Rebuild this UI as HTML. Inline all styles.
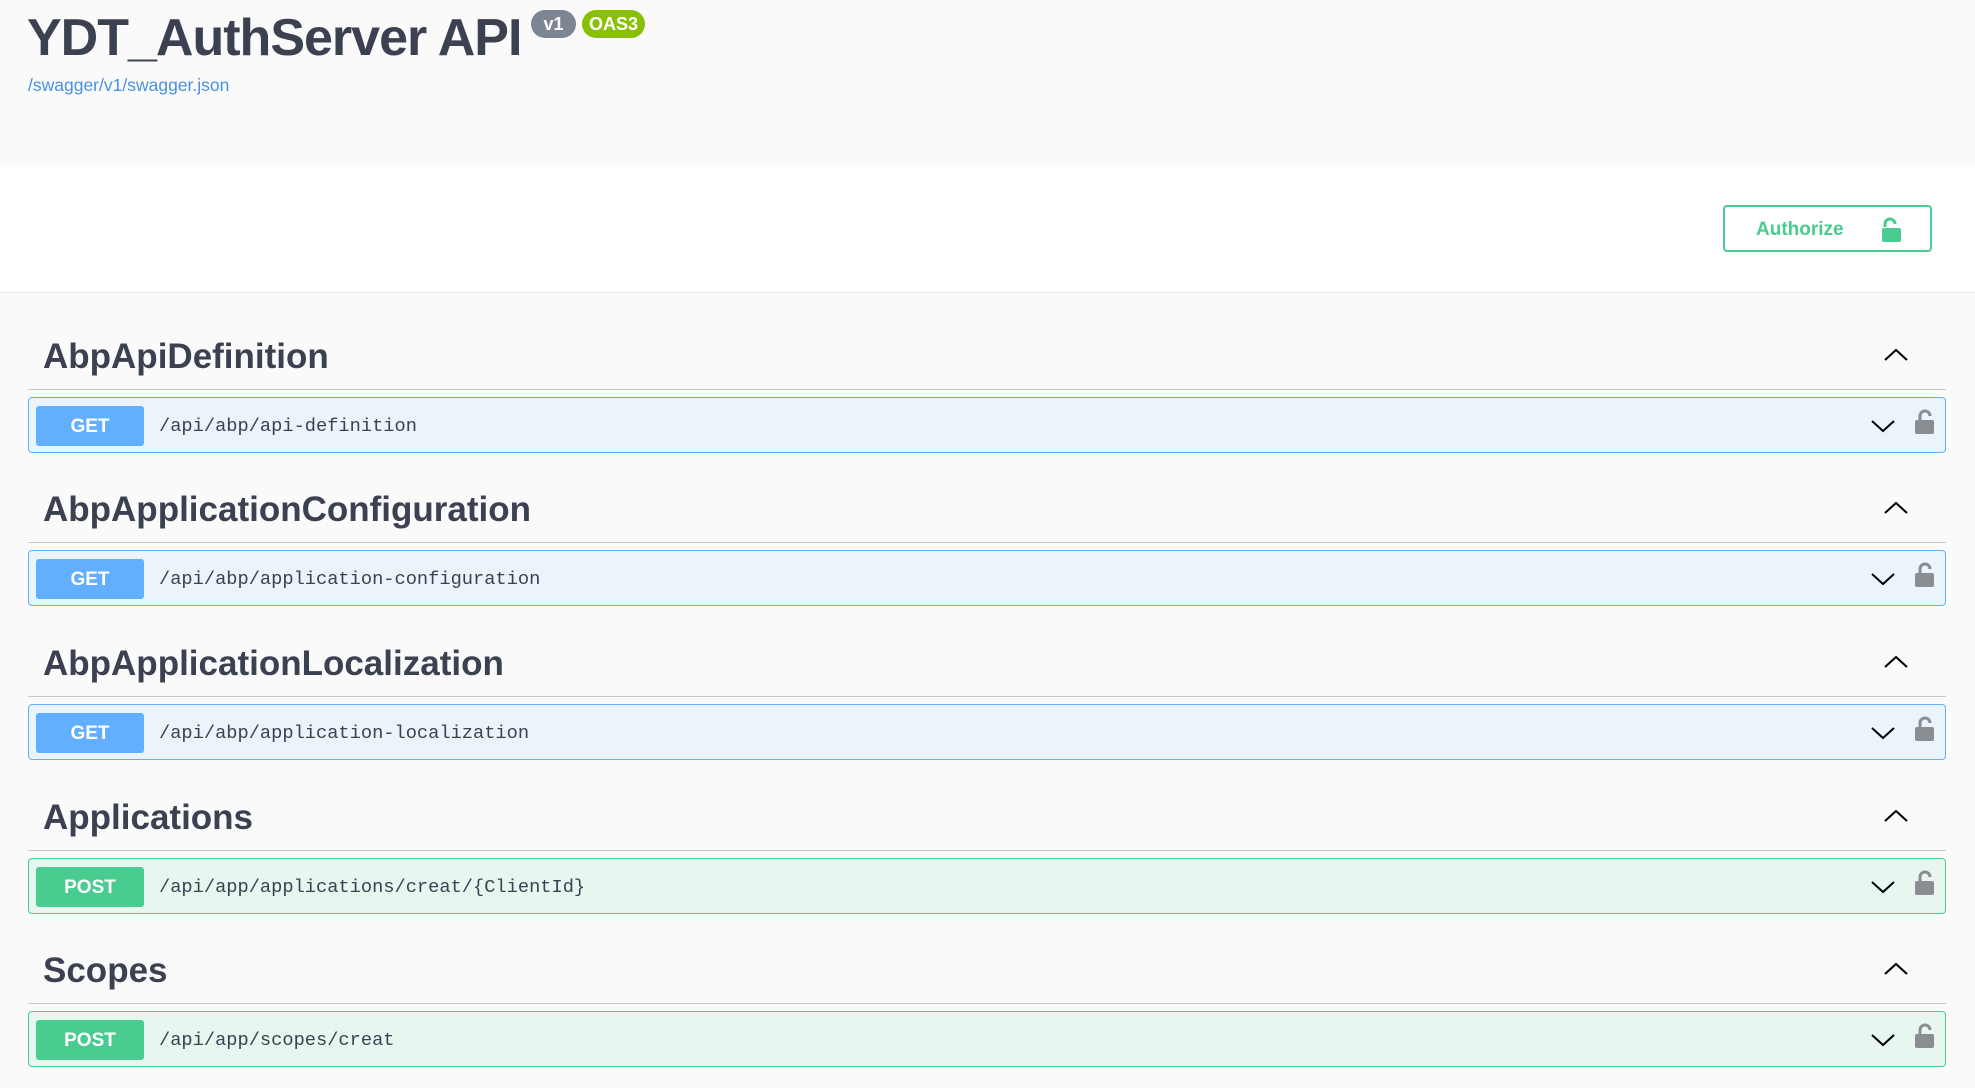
<!DOCTYPE html>
<html><head><meta charset="utf-8"><style>
*{margin:0;padding:0;box-sizing:border-box}
body{width:1975px;height:1088px;overflow:hidden;background:#fafafa;font-family:"Liberation Sans",sans-serif;color:#3b4151;position:relative}
.abs{position:absolute}
.title{left:27px;top:8px;font-size:52px;font-weight:bold;letter-spacing:-1px;white-space:nowrap}
.badge{position:absolute;top:10px;height:28px;border-radius:14px;color:#fff;font-size:18px;font-weight:bold;line-height:28px;text-align:center}
.link{left:28px;top:75px;font-size:17.5px;color:#4990e2}
.white{left:0;top:165px;width:1975px;height:128px;background:#fff;border-bottom:1px solid #e8e8e8}
.auth{left:1723px;top:205px;width:209px;height:47px;border:2px solid #49cc90;border-radius:4px;color:#49cc90;font-weight:bold;font-size:19px;line-height:45px;padding-left:31px}
.sec{position:absolute;left:28px;width:1918px}
.sec h2{position:absolute;left:15px;font-size:35px;font-weight:bold;white-space:nowrap}
.sec .div{position:absolute;left:0;top:33px;width:1918px;height:1px;background:#c8c8c8}
.row{position:absolute;left:0;top:41px;width:1918px;height:56px;border:1px solid;border-radius:4px}
.row .m{position:absolute;left:7px;top:8px;width:108px;height:40px;border-radius:3px;color:#fff;font-weight:bold;font-size:19px;line-height:41px;text-align:center}
.row .p{position:absolute;left:130px;top:17px;font-family:"Liberation Mono",monospace;font-size:18.7px;color:#3b4151;white-space:nowrap}
.get{background:#ebf3fb;border-color:#61affe}.get .m{background:#61affe}
.post{background:#e8f6f0;border-color:#49cc90}.post .m{background:#49cc90}
svg{position:absolute}
</style></head><body>
<div class="abs title">YDT_AuthServer API</div>
<div class="badge" style="left:531px;width:45px;background:#7d8492">v1</div>
<div class="badge" style="left:582px;width:63px;background:#89bf04">OAS3</div>
<div class="abs link">/swagger/v1/swagger.json</div>
<div class="abs white"></div>
<div class="abs auth">Authorize
<svg style="left:156px;top:10px" width="22" height="26" viewBox="0 0 22 26"><path d="M4 10V7a5 5 0 0 1 10 0" fill="none" stroke="#49cc90" stroke-width="3"/><rect x="1" y="11" width="19" height="14" rx="2" fill="#49cc90"/></svg></div>

<div class="sec" style="top:356px">
<h2 style="top:-19px">AbpApiDefinition</h2><div class="div"></div>
<div class="row get"><div class="m">GET</div><div class="p">/api/abp/api-definition</div></div>
</div>
<div class="sec" style="top:509px">
<h2 style="top:-19px">AbpApplicationConfiguration</h2><div class="div"></div>
<div class="row get"><div class="m">GET</div><div class="p">/api/abp/application-configuration</div></div>
</div>
<div class="sec" style="top:663px">
<h2 style="top:-19px">AbpApplicationLocalization</h2><div class="div"></div>
<div class="row get"><div class="m">GET</div><div class="p">/api/abp/application-localization</div></div>
</div>
<div class="sec" style="top:817px">
<h2 style="top:-19px">Applications</h2><div class="div"></div>
<div class="row post"><div class="m">POST</div><div class="p">/api/app/applications/creat/{ClientId}</div></div>
</div>
<div class="sec" style="top:970px">
<h2 style="top:-19px">Scopes</h2><div class="div"></div>
<div class="row post"><div class="m">POST</div><div class="p">/api/app/scopes/creat</div></div>
</div>

<svg width="1975" height="1088" style="left:0;top:0;pointer-events:none">
<defs>
<g id="up"><path d="M-11 5L0-5L11 5" fill="none" stroke="#000" stroke-width="2"/></g>
<g id="dn"><path d="M-11-5L0 5L11-5" fill="none" stroke="#000" stroke-width="2"/></g>
<g id="lk"><path d="M-5 -2V-6a5 5 0 0 1 10 0" fill="none" stroke="#8a8d91" stroke-width="3"/><rect x="-10" y="-2" width="19" height="14" rx="2" fill="#8a8d91"/></g>
</defs>
<use href="#up" x="1896" y="355"/><use href="#dn" x="1883" y="426"/><use href="#lk" x="1925" y="422"/>
<use href="#up" x="1896" y="508"/><use href="#dn" x="1883" y="579"/><use href="#lk" x="1925" y="575"/>
<use href="#up" x="1896" y="662"/><use href="#dn" x="1883" y="733"/><use href="#lk" x="1925" y="729"/>
<use href="#up" x="1896" y="816"/><use href="#dn" x="1883" y="887"/><use href="#lk" x="1925" y="883"/>
<use href="#up" x="1896" y="969"/><use href="#dn" x="1883" y="1040"/><use href="#lk" x="1925" y="1036"/>
</svg>
</body></html>
